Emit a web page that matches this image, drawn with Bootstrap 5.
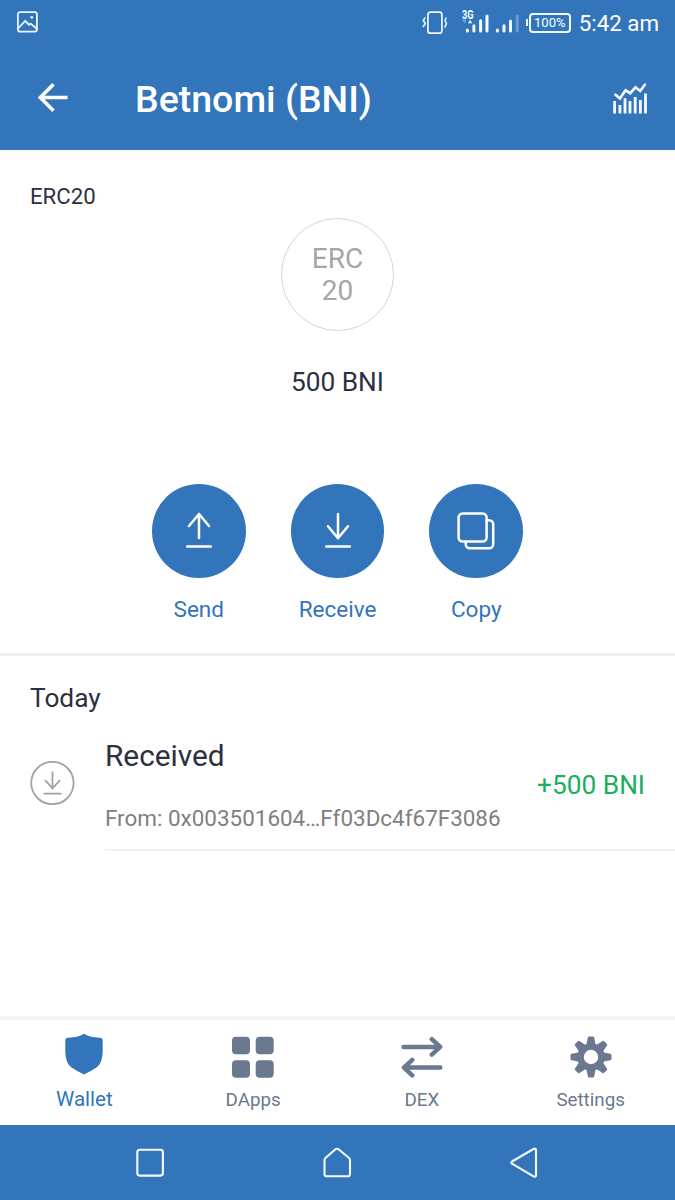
<!DOCTYPE html>
<html lang="en">
<head>
<meta charset="utf-8">
<meta name="viewport" content="width=device-width, initial-scale=1">
<title>Betnomi (BNI)</title>
<link href="https://cdn.jsdelivr.net/npm/bootstrap@5.3.0/dist/css/bootstrap.min.css" rel="stylesheet">
<style>
  :root { --brand: #3275bb; --ink: #2c3040; --slate: #6a798f; }
  body { font-family: Roboto, "Noto Sans", sans-serif; color: var(--ink); background: #fff; line-height: 1.2; }
  svg { display: block; flex: none; fill: none; stroke-linecap: round; stroke-linejoin: round; }
  .butt { stroke-linecap: butt; stroke-linejoin: miter; }
  .solid-brand { fill: var(--brand); }
  .solid-slate { fill: var(--slate); }
  .screen { height: 1200px; overflow: hidden; }
  .brand-bar { background: var(--brand); color: #fff; }
  .status-bar { height: 45px; padding-left: 16px; padding-right: 16px; }
  .battery { width: 42px; height: 20px; border: 2px solid #eef7ff; border-radius: 4px; font-size: 13px; line-height: 16px; margin-left: 1px; }
  .battery-tip { width: 2px; height: 7px; background: #eef7ff; margin-left: 7px; }
  .clock { font-size: 22.3px; margin-left: 8px; padding-top: 1px; }
  .app-bar { height: 105px; padding: 0 27px 0 37px; }
  .app-title { font-size: 37.5px; font-weight: 500; margin: 3px 0 0 66px; }
  .overview { height: 506px; border-bottom: 3px solid #f0f0f0; }
  .kind { font-size: 22.2px; line-height: 26px; padding: 33px 30px 0; }
  .token { width: 113px; height: 113px; border: 1px solid #d5d5d5; color: #a6a6a6; font-size: 28px; line-height: 32px; margin-top: 9px; }
  .amount { font-size: 26.25px; line-height: 32px; margin-top: 35px; }
  .actions { gap: 45px; margin-top: 86px; }
  .action { width: 93.75px; color: var(--brand); font-size: 22.5px; line-height: 28px; }
  .disc { width: 93.75px; height: 93.75px; background: var(--brand); margin-bottom: 17px; }
  .day { font-size: 26.25px; line-height: 32px; padding: 26px 30px 0; }
  .entry { padding-left: 30px; }
  .entry-icon { margin-top: 47px; margin-right: 30px; }
  .entry-body { height: 137px; border-bottom: 2px solid #f2f2f2; padding-right: 30px; }
  .entry-title { font-size: 29.8px; line-height: 36px; margin-top: 24px; }
  .entry-from { font-size: 22.45px; line-height: 28px; margin-top: 30px; color: #808080; white-space: nowrap; }
  .entry-sum { font-size: 26.25px; line-height: 32px; margin-top: 55px; color: #1aaf5d; white-space: nowrap; }
  .tabs { height: 109px; border-top: 4px solid #f6f6f6; }
  .tab { color: var(--slate); font-size: 18.75px; line-height: 24px; padding-top: 16px; }
  .tab.active { color: var(--brand); font-size: 20.6px; padding-top: 12.5px; }
  .tab span { margin-top: 10px; }
  .tab.active span { margin-top: 12.5px; }
  .system-bar { height: 75px; padding: 0 56px; }
</style>
</head>
<body>
<div class="screen d-flex flex-column">
  <header class="brand-bar">
    <div class="status-bar d-flex align-items-center">
      <svg class="me-auto" width="23" height="23" viewBox="0 0 23 23" stroke="#eef7ff" stroke-width="1.8"><rect x="1.9" y="1.2" width="19" height="19.4" rx="2"/><path d="M2.5 17 9.3 9.800 13 13.800 14.600 12.600 20.500 17.500"/><circle cx="15.800" cy="6.300" r="1.400" fill="#eef7ff" stroke="none"/></svg>
      <svg width="27" height="26" viewBox="0 0 27 26" stroke="#eef7ff" stroke-width="1.700"><rect x="6.900" y="2.200" width="14" height="21" rx="2.500"/><path d="M3.800 8 2.300 10.500 4.300 13.500 2.300 16.500M25 8l-1 2.500 1.500 3-1.500 3.500" stroke-width="1.600"/></svg>
      <svg width="71" height="30" viewBox="0 0 71 30" stroke="#f4faff" stroke-width="3"><text x="14" y="10.500" font-family="Roboto, sans-serif" font-weight="700" font-size="12" textLength="11.500" lengthAdjust="spacingAndGlyphs" fill="#f4faff" stroke="none">3G</text><path d="M19.400 22v1M25.900 17.800v5.200M32.600 12.800v10.200M39 8v15"/><path d="M20 15.300l2.100-3.500 2.100 3.500z" fill="#f4faff" stroke="none"/><path d="M14.200 11.500h4.500l-2.200 3.700z" fill="#75a5d6" stroke="none"/><path d="M49.400 22v1M56 17.800v5.200M62.500 13v10"/><path d="M69.200 8v15" stroke="#6b9dd1"/></svg>
      <span class="battery-tip"></span><span class="battery d-flex justify-content-center">100%</span>
      <span class="clock">5:42 am</span>
    </div>
    <div class="app-bar d-flex align-items-center">
      <svg class="butt" width="32" height="32" viewBox="0 0 32 32" stroke="#fff" stroke-width="3.600"><path d="M30.500 15.500H3.500M16.500 2.300 3.300 15.500 16.500 28.700"/></svg>
      <h1 class="app-title me-auto">Betnomi (BNI)</h1>
      <svg class="butt" width="36" height="34" viewBox="0 0 36 34" stroke="#f4faff" stroke-width="2.800"><path d="M2.600 32.500V20M7.900 32.500V24M13 32.500V17.200M18 32.500V20M23.200 32.500V16M28.400 32.500V19M33.500 32.500V12.500"/><path d="M3.500 13.700 7.900 17.500 13.500 9.300 18.200 12.200 23.500 6.300 28.200 10 33 3.500" stroke-width="2.600" stroke-linecap="round"/></svg>
    </div>
  </header>

  <main class="flex-grow-1">
    <section class="overview">
      <div class="kind">ERC20</div>
      <div class="d-flex flex-column align-items-center text-center">
        <div class="token rounded-circle d-flex align-items-center justify-content-center">ERC<br>20</div>
        <div class="amount">500 BNI</div>
        <div class="actions d-flex">
          <div class="action d-flex flex-column align-items-center">
            <div class="disc rounded-circle d-flex align-items-center justify-content-center"><svg width="40" height="40" viewBox="0 0 40 40" stroke="#fff" stroke-width="2.500"><path d="M20 27V3M10 15 20 3 30 15M8.200 35.500h23.600"/></svg></div>Send
          </div>
          <div class="action d-flex flex-column align-items-center">
            <div class="disc rounded-circle d-flex align-items-center justify-content-center"><svg width="40" height="40" viewBox="0 0 40 40" stroke="#fff" stroke-width="2.500"><path d="M20 3V27.300M10 15.300 20 27.300 30 15.300M8.200 35.500h23.600"/></svg></div>Receive
          </div>
          <div class="action d-flex flex-column align-items-center">
            <div class="disc rounded-circle d-flex align-items-center justify-content-center"><svg width="40" height="40" viewBox="0 0 40 40" stroke="#fff" stroke-width="2.500"><rect x="2.600" y="2.500" width="28" height="28" rx="4"/><path d="M30.700 9.300h2.500a4 4 0 0 1 4 4v20a4 4 0 0 1-4 4h-19.500a4 4 0 0 1-4-4v-2.500"/></svg></div>Copy
          </div>
        </div>
      </div>
    </section>

    <section>
      <h2 class="day fw-normal mb-0">Today</h2>
      <div class="entry d-flex">
        <svg class="entry-icon" width="45" height="45" viewBox="0 0 45 45" stroke="#a3a3a3" stroke-width="1.800"><circle cx="22.400" cy="22" r="21.200"/><path d="M22.500 11.200v16.200M15.500 19.700l7 7.700 7-7.700M14.300 32.700h16.400"/></svg>
        <div class="entry-body d-flex flex-grow-1">
          <div class="me-auto">
            <div class="entry-title">Received</div>
            <div class="entry-from">From: 0x003501604…Ff03Dc4f67F3086</div>
          </div>
          <div class="entry-sum">+500 BNI</div>
        </div>
      </div>
    </section>
  </main>

  <nav class="tabs row g-0">
    <div class="tab active col-3 d-flex flex-column align-items-center">
      <svg class="solid-brand" width="42" height="42" viewBox="0 0 42 42"><path d="M21 .800C24 2.300 27 4 31.500 4.300L37 4.800Q39.800 5 39.700 7.800V17C39.500 26 38 31 33.500 34.500 29 37.500 24.500 39.500 21 41.600 17.500 39.500 13 37.500 8.500 34.500 4 31 2.500 26 2.300 17V7.800Q2.200 5 5 4.800L10.500 4.300C15 4 18 2.300 21 .800Z"/></svg>
      <span>Wallet</span>
    </div>
    <div class="tab col-3 d-flex flex-column align-items-center">
      <svg class="solid-slate" width="42" height="42" viewBox="0 0 42 42"><rect x="0" y=".8" width="18" height="17.500" rx="4"/><rect x="23.700" y=".8" width="18" height="17.500" rx="4"/><rect x="0" y="24.300" width="18" height="17.500" rx="4"/><rect x="23.700" y="24.300" width="18" height="17.500" rx="4"/></svg>
      <span>DApps</span>
    </div>
    <div class="tab col-3 d-flex flex-column align-items-center">
      <svg width="42" height="42" viewBox="0 0 42 42" stroke="#6a798f" stroke-width="4.500"><path d="M2.600 10.900H39M30.800 3.200 39.200 10.900l-8.400 7.700M39.300 31.600H3M11.300 23.900 2.900 31.600l8.400 7.700"/></svg>
      <span>DEX</span>
    </div>
    <div class="tab col-3 d-flex flex-column align-items-center">
      <svg width="42" height="42" viewBox="-21 -21 42 42" stroke="#6a798f"><circle r="10.500" stroke-width="6.600"/><g class="solid-slate" stroke-width="2.600"><path id="tooth" d="M-3.200-12.500-1.900-19.200H1.900L3.200-12.500Z"/><use href="#tooth" transform="rotate(45)"/><use href="#tooth" transform="rotate(90)"/><use href="#tooth" transform="rotate(135)"/><use href="#tooth" transform="rotate(180)"/><use href="#tooth" transform="rotate(225)"/><use href="#tooth" transform="rotate(270)"/><use href="#tooth" transform="rotate(315)"/></g></svg>
      <span>Settings</span>
    </div>
  </nav>

  <footer class="brand-bar system-bar">
    <div class="row g-0 h-100 align-items-center">
      <div class="col-4 d-flex justify-content-center"><svg width="30" height="32" viewBox="0 0 30 32" stroke="#f4faff" stroke-width="2.100"><rect x="2.300" y="2.800" width="25.600" height="25.800" rx="2.500"/></svg></div>
      <div class="col-4 d-flex justify-content-center"><svg width="30" height="32" viewBox="0 0 30 32" stroke="#f4faff" stroke-width="2.100"><path d="M2.500 13.200Q2.500 11.700 3.700 10.700L13.500 2.200Q15 1.200 16.500 2.200L26.800 10.700Q28 11.700 28 13.200V27Q28 29.300 25.500 29.300H5Q2.500 29.300 2.500 27Z"/></svg></div>
      <div class="col-4 d-flex justify-content-center"><svg width="30" height="32" viewBox="0 0 30 32" stroke="#f4faff" stroke-width="2.100"><path d="M23.500 2 2 14.500Q.500 15.500 2 16.700L23.500 29.300Q26 30.500 26 28.300V3.200Q26 .800 23.500 2Z"/></svg></div>
    </div>
  </footer>
</div>
<script src="https://cdn.jsdelivr.net/npm/bootstrap@5.3.0/dist/js/bootstrap.bundle.min.js"></script>
</body>
</html>
